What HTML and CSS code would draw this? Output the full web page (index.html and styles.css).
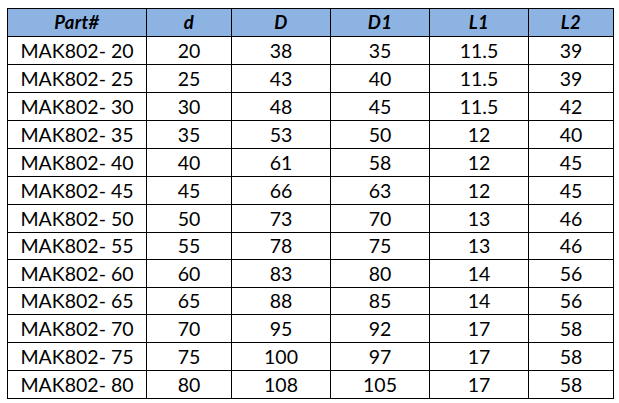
FILE: index.html
```html
<!DOCTYPE html>
<html>
<head>
<meta charset="utf-8">
<link rel="stylesheet" href="styles.css">
</head>
<body>
<div class="sheet">
  <div class="hd">Part#</div><div class="hd">d</div><div class="hd">D</div><div class="hd">D1</div><div class="hd">L1</div><div class="hd">L2</div>
  <div>MAK802- 20</div><div>20</div><div>38</div><div>35</div><div>11.5</div><div>39</div>
  <div>MAK802- 25</div><div>25</div><div>43</div><div>40</div><div>11.5</div><div>39</div>
  <div>MAK802- 30</div><div>30</div><div>48</div><div>45</div><div>11.5</div><div>42</div>
  <div>MAK802- 35</div><div>35</div><div>53</div><div>50</div><div>12</div><div>40</div>
  <div>MAK802- 40</div><div>40</div><div>61</div><div>58</div><div>12</div><div>45</div>
  <div>MAK802- 45</div><div>45</div><div>66</div><div>63</div><div>12</div><div>45</div>
  <div>MAK802- 50</div><div>50</div><div>73</div><div>70</div><div>13</div><div>46</div>
  <div>MAK802- 55</div><div>55</div><div>78</div><div>75</div><div>13</div><div>46</div>
  <div>MAK802- 60</div><div>60</div><div>83</div><div>80</div><div>14</div><div>56</div>
  <div>MAK802- 65</div><div>65</div><div>88</div><div>85</div><div>14</div><div>56</div>
  <div>MAK802- 70</div><div>70</div><div>95</div><div>92</div><div>17</div><div>58</div>
  <div>MAK802- 75</div><div>75</div><div>100</div><div>97</div><div>17</div><div>58</div>
  <div>MAK802- 80</div><div>80</div><div>108</div><div>105</div><div>17</div><div>58</div>
</div>
</body>
</html>
```
FILE: styles.css
```css
html, body {
  background: #ffffff;
}
body {
  margin: 8px 0 0 7px;
  font-family: Lato, "Liberation Sans", sans-serif;
}
.sheet {
  display: inline-grid;
  grid-template-columns: 138px 84px 98px 98px 98px 84px;
  grid-template-rows: 27px 27px 27px 27px 27px 27px 27px 27px 26px 27px 26px 27px 27px 27px;
  gap: 1px;
  padding: 1px;
  background: #000000;
}
.sheet > div {
  background: #ffffff;
  color: #000000;
  display: flex;
  align-items: center;
  justify-content: center;
  font-size: 19.5px;
  line-height: 1;
}
.sheet > .hd {
  background: #8db3e2;
  font-weight: bold;
  font-style: italic;
  font-size: 18.5px;
  letter-spacing: 0.3px;
}
```
